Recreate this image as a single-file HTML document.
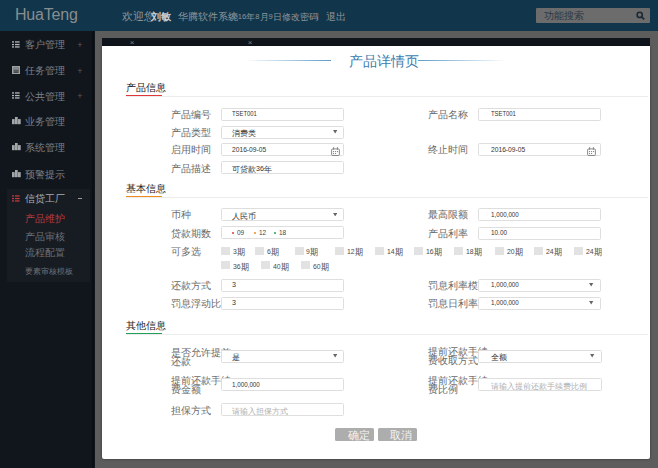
<!DOCTYPE html>
<html><head><meta charset="utf-8"><title>产品详情页</title>
<style>
html,body{margin:0;padding:0}
body{width:658px;height:468px;position:relative;overflow:hidden;background:#5d5d5d;font-family:"Liberation Sans",sans-serif}
body>div{position:absolute}
.t{white-space:nowrap}
.c{line-height:0;position:relative;top:2px}
.l{position:relative;top:1.2px}
</style></head><body>
<div style="left:0.0px;top:0.0px;width:658.0px;height:31.0px;background:#11354a"></div>
<div class="t" style="left:15px;top:4.6px;font-size:16px;line-height:20px;color:#8a8d8f;letter-spacing:-0.2px">HuaTeng</div>
<div class="t" style="left:122.3px;top:10.0px;line-height:12px;font-size:7.50px;color:#8d969d;"><span class="c" style="font-size:10.53px">欢迎您</span></div>
<div class="t" style="left:147.5px;top:10.0px;line-height:12px;font-size:7.50px;color:#8d969d;">:</div>
<div class="t" style="left:151.2px;top:10.0px;line-height:12px;font-size:7.50px;color:#c9cdd0;font-weight:bold"><span class="c" style="font-size:10.13px">刘敏</span></div>
<div class="t" style="left:178.0px;top:10.0px;line-height:12px;font-size:7.50px;color:#8d969d;"><span class="c" style="font-size:9.60px">华腾软件系统</span></div>
<div class="t" style="left:229.4px;top:10.0px;line-height:12px;font-size:7.60px;color:#8d969d;"><span class="l">2016</span><span class="c" style="font-size:8.80px">年</span><span class="l">8</span><span class="c" style="font-size:8.80px">月</span><span class="l">9</span><span class="c" style="font-size:8.80px">日</span></div>
<div class="t" style="left:281.5px;top:10.0px;line-height:12px;font-size:7.50px;color:#8d969d;"><span class="c" style="font-size:9.47px">修改密码</span></div>
<div class="t" style="left:316.8px;top:10.0px;line-height:12px;font-size:7.50px;color:#8d969d;">|</div>
<div class="t" style="left:326.0px;top:10.0px;line-height:12px;font-size:7.50px;color:#8d969d;"><span class="c" style="font-size:10.13px">退出</span></div>
<div style="left:536.0px;top:8.0px;width:114.0px;height:14.8px;background:#6c6c6d;border-radius:1px"></div>
<div class="t" style="left:544.0px;top:9.3px;line-height:12px;font-size:7.50px;color:#2b3944;"><span class="c" style="font-size:9.87px">功能搜索</span></div>
<svg style="position:absolute;left:636px;top:10.5px" width="10" height="10" viewBox="0 0 10 10"><circle cx="3.7" cy="3.9" r="2.6" fill="none" stroke="#1c2a34" stroke-width="1.6"/><line x1="5.6" y1="5.8" x2="8.2" y2="8.4" stroke="#1c2a34" stroke-width="1.7"/></svg>
<div style="left:0.0px;top:31.0px;width:95.0px;height:437.0px;background:#11161d"></div>
<div style="left:91.8px;top:31.0px;width:2.2px;height:437.0px;background:#0b0f14"></div>
<div class="t" style="left:25.3px;top:38.3px;line-height:12px;font-size:7.50px;color:#7d8186;"><span class="c" style="font-size:9.87px">客户管理</span></div>
<div class="t" style="left:77.2px;top:39.0px;line-height:12px;font-size:9.00px;color:#565a5f;">+</div>
<svg style="position:absolute;left:12px;top:40.8px" width="8" height="7" viewBox="0 0 8 7"><g fill="#b4b7ba"><rect x="0" y="0.3" width="2" height="1.3"/><rect x="3" y="0.3" width="4.6" height="1.3"/><rect x="0" y="2.9" width="2" height="1.3"/><rect x="3" y="2.9" width="4.6" height="1.3"/><rect x="0" y="5.3" width="2" height="1.3"/><rect x="3" y="5.3" width="4.6" height="1.3"/></g></svg>
<div class="t" style="left:25.3px;top:63.8px;line-height:12px;font-size:7.50px;color:#7d8186;"><span class="c" style="font-size:9.87px">任务管理</span></div>
<div class="t" style="left:77.2px;top:64.5px;line-height:12px;font-size:9.00px;color:#565a5f;">+</div>
<svg style="position:absolute;left:12px;top:65.5px" width="8.2" height="8.5" viewBox="0 0 8.2 8.5"><rect x="0" y="0" width="8.2" height="8.5" fill="#9fa2a5"/><rect x="1.6" y="1.6" width="5" height="5.3" fill="#3a3d41"/><rect x="1.6" y="1.6" width="5" height="2.2" fill="#8a8d90"/><rect x="1.6" y="4.6" width="5" height="0.9" fill="#777a7d"/></svg>
<div class="t" style="left:25.3px;top:89.5px;line-height:12px;font-size:7.50px;color:#7d8186;"><span class="c" style="font-size:9.87px">公共管理</span></div>
<div class="t" style="left:77.2px;top:90.2px;line-height:12px;font-size:9.00px;color:#565a5f;">+</div>
<svg style="position:absolute;left:12px;top:92.0px" width="8" height="7" viewBox="0 0 8 7"><g fill="#b4b7ba"><rect x="0" y="0.3" width="2" height="1.3"/><rect x="3" y="0.3" width="4.6" height="1.3"/><rect x="0" y="2.9" width="2" height="1.3"/><rect x="3" y="2.9" width="4.6" height="1.3"/><rect x="0" y="5.3" width="2" height="1.3"/><rect x="3" y="5.3" width="4.6" height="1.3"/></g></svg>
<div class="t" style="left:25.3px;top:115.2px;line-height:12px;font-size:7.50px;color:#7d8186;"><span class="c" style="font-size:9.87px">业务管理</span></div>
<svg style="position:absolute;left:11.8px;top:117.2px" width="9" height="8" viewBox="0 0 9 8"><g fill="#a4a7aa"><rect x="0" y="2.1" width="2.7" height="5.1"/><rect x="3" y="0" width="2.7" height="7.2"/><rect x="6" y="2.1" width="2.7" height="5.1"/></g></svg>
<div class="t" style="left:25.3px;top:141.4px;line-height:12px;font-size:7.50px;color:#7d8186;"><span class="c" style="font-size:9.87px">系统管理</span></div>
<svg style="position:absolute;left:11.8px;top:143.4px" width="9" height="8" viewBox="0 0 9 8"><g fill="#a4a7aa"><rect x="0" y="2.1" width="2.7" height="5.1"/><rect x="3" y="0" width="2.7" height="7.2"/><rect x="6" y="2.1" width="2.7" height="5.1"/></g></svg>
<div class="t" style="left:25.3px;top:167.5px;line-height:12px;font-size:7.50px;color:#7d8186;"><span class="c" style="font-size:9.87px">预警提示</span></div>
<svg style="position:absolute;left:11.8px;top:169.5px" width="9" height="8" viewBox="0 0 9 8"><g fill="#a4a7aa"><rect x="0" y="2.1" width="2.7" height="5.1"/><rect x="3" y="0" width="2.7" height="7.2"/><rect x="6" y="2.1" width="2.7" height="5.1"/></g></svg>
<div style="left:6.5px;top:189.4px;width:83.0px;height:92.5px;background:#171c23"></div>
<svg style="position:absolute;left:12px;top:194.8px" width="8" height="7" viewBox="0 0 8 7"><g fill="#c0383a"><rect x="0" y="0.3" width="2" height="1.3"/><rect x="3" y="0.3" width="4.6" height="1.3"/><rect x="0" y="2.9" width="2" height="1.3"/><rect x="3" y="2.9" width="4.6" height="1.3"/><rect x="0" y="5.3" width="2" height="1.3"/><rect x="3" y="5.3" width="4.6" height="1.3"/></g></svg>
<div class="t" style="left:25.2px;top:192.3px;line-height:12px;font-size:7.50px;color:#a9adb1;"><span class="c" style="font-size:9.60px">信贷工厂</span></div>
<div style="left:77.6px;top:198.0px;width:4.7px;height:0.9px;background:#9a9ea2"></div>
<div class="t" style="left:25.2px;top:211.6px;line-height:12px;font-size:7.50px;color:#b83a3c;"><span class="c" style="font-size:9.60px">产品维护</span></div>
<div class="t" style="left:25.2px;top:229.7px;line-height:12px;font-size:7.50px;color:#6d7176;"><span class="c" style="font-size:9.60px">产品审核</span></div>
<div class="t" style="left:25.2px;top:246.2px;line-height:12px;font-size:7.50px;color:#6d7176;"><span class="c" style="font-size:9.60px">流程配置</span></div>
<div class="t" style="left:25.2px;top:264.0px;line-height:12px;font-size:7.50px;color:#6d7176;"><span class="c" style="font-size:8.00px">要素审核模板</span></div>
<div style="left:102.0px;top:38.0px;width:548.0px;height:8.0px;background:#10151c"></div>
<div class="t" style="left:129.8px;top:39.1px;line-height:8px;font-size:8.00px;color:#7d8083;">×</div>
<div class="t" style="left:247.8px;top:39.1px;line-height:8px;font-size:8.00px;color:#7d8083;">×</div>
<div style="left:102.0px;top:46.0px;width:548.0px;height:413.3px;background:#ffffff;border-radius:0 0 2px 2px;box-shadow:0 0 2.5px rgba(0,0,0,.5)"></div>
<div style="left:245.0px;top:60.0px;width:86.0px;height:1.0px;background:linear-gradient(to right,rgba(79,143,190,0),#5c9bc9)"></div>
<div style="left:418.0px;top:60.0px;width:88.0px;height:1.0px;background:linear-gradient(to right,#5c9bc9,rgba(79,143,190,0))"></div>
<div class="t" style="left:349.3px;top:52.8px;line-height:16px;font-size:10.00px;color:#3a7cae;"><span class="c" style="font-size:14.13px">产品详情页</span></div>
<div class="t" style="left:125.6px;top:80.8px;line-height:12px;font-size:7.50px;color:#222;"><span class="c" style="font-size:9.73px">产品信息</span></div>
<div style="left:159.5px;top:85.7px;width:2.2px;height:2.2px;background:#e0383a;border-radius:50%"></div>
<div style="left:126.0px;top:95.7px;width:522.0px;height:1.0px;background:#ececec"></div>
<div style="left:125.6px;top:94.9px;width:36.4px;height:1.6px;background:#e0383a"></div>
<div class="t" style="left:125.6px;top:182.2px;line-height:12px;font-size:7.50px;color:#222;"><span class="c" style="font-size:9.73px">基本信息</span></div>
<div style="left:159.5px;top:187.1px;width:2.2px;height:2.2px;background:#f08c1e;border-radius:50%"></div>
<div style="left:126.0px;top:196.5px;width:522.0px;height:1.0px;background:#ececec"></div>
<div style="left:125.6px;top:195.7px;width:36.4px;height:1.6px;background:#f08c1e"></div>
<div class="t" style="left:125.6px;top:319.0px;line-height:12px;font-size:7.50px;color:#222;"><span class="c" style="font-size:9.73px">其他信息</span></div>
<div style="left:159.5px;top:323.9px;width:2.2px;height:2.2px;background:#22a05a;border-radius:50%"></div>
<div style="left:126.0px;top:333.5px;width:522.0px;height:1.0px;background:#ececec"></div>
<div style="left:125.6px;top:332.7px;width:36.4px;height:1.6px;background:#22a05a"></div>
<div class="t" style="left:170.9px;top:107.9px;line-height:12px;font-size:7.50px;color:#6a6a6a;"><span class="c" style="font-size:9.53px">产品编号</span></div>
<div style="left:221.0px;top:107.5px;width:123.0px;height:13.0px;box-sizing:border-box;border:1px solid #dedede;border-radius:1.5px;background:#fff"></div>
<div class="t" style="left:232.0px;top:108.3px;line-height:12px;font-size:7.20px;color:#333;;transform:scaleX(0.820);transform-origin:0 50%">TSET001</div>
<div class="t" style="left:427.5px;top:107.9px;line-height:12px;font-size:7.50px;color:#6a6a6a;"><span class="c" style="font-size:9.53px">产品名称</span></div>
<div style="left:477.6px;top:107.5px;width:123.0px;height:13.0px;box-sizing:border-box;border:1px solid #dedede;border-radius:1.5px;background:#fff"></div>
<div class="t" style="left:490.6px;top:108.3px;line-height:12px;font-size:7.20px;color:#333;;transform:scaleX(0.820);transform-origin:0 50%">TSET001</div>
<div class="t" style="left:170.9px;top:125.9px;line-height:12px;font-size:7.50px;color:#6a6a6a;"><span class="c" style="font-size:9.53px">产品类型</span></div>
<div style="left:221.0px;top:125.5px;width:123.0px;height:13.0px;box-sizing:border-box;border:1px solid #dedede;border-radius:1.5px;background:#fff"></div>
<div class="t" style="left:232.0px;top:126.3px;line-height:12px;font-size:7.20px;color:#333;"><span class="c" style="font-size:8.27px">消费类</span></div>
<svg style="position:absolute;left:332.8px;top:130.4px" width="4.4" height="3.4" viewBox="0 0 5 4"><path d="M0 0H5L2.5 4Z" fill="#666"/></svg>
<div class="t" style="left:170.9px;top:143.2px;line-height:12px;font-size:7.50px;color:#6a6a6a;"><span class="c" style="font-size:9.53px">启用时间</span></div>
<div style="left:221.0px;top:142.8px;width:123.0px;height:13.0px;box-sizing:border-box;border:1px solid #dedede;border-radius:1.5px;background:#fff"></div>
<div class="t" style="left:232.0px;top:143.6px;line-height:12px;font-size:7.20px;color:#333;;transform:scaleX(0.930);transform-origin:0 50%">2016-09-05</div>
<svg style="position:absolute;left:330.6px;top:146.9px" width="9" height="9" viewBox="0 0 9 9"><rect x="0.6" y="1.9" width="7.8" height="6.6" rx="1.2" fill="none" stroke="#7d7d7d" stroke-width="0.9"/><rect x="2.2" y="0.2" width="0.9" height="2.6" fill="#7d7d7d"/><rect x="5.9" y="0.2" width="0.9" height="2.6" fill="#7d7d7d"/><g fill="#8a8a8a"><rect x="2" y="4" width="1.1" height="1.1"/><rect x="4" y="4" width="1.1" height="1.1"/><rect x="6" y="4" width="1.1" height="1.1"/><rect x="2" y="6" width="1.1" height="1.1"/><rect x="4" y="6" width="1.1" height="1.1"/></g></svg>
<div class="t" style="left:427.5px;top:143.2px;line-height:12px;font-size:7.50px;color:#6a6a6a;"><span class="c" style="font-size:9.53px">终止时间</span></div>
<div style="left:477.6px;top:142.8px;width:123.0px;height:13.0px;box-sizing:border-box;border:1px solid #dedede;border-radius:1.5px;background:#fff"></div>
<div class="t" style="left:490.6px;top:143.6px;line-height:12px;font-size:7.20px;color:#333;;transform:scaleX(0.930);transform-origin:0 50%">2016-09-05</div>
<svg style="position:absolute;left:587.2px;top:146.9px" width="9" height="9" viewBox="0 0 9 9"><rect x="0.6" y="1.9" width="7.8" height="6.6" rx="1.2" fill="none" stroke="#7d7d7d" stroke-width="0.9"/><rect x="2.2" y="0.2" width="0.9" height="2.6" fill="#7d7d7d"/><rect x="5.9" y="0.2" width="0.9" height="2.6" fill="#7d7d7d"/><g fill="#8a8a8a"><rect x="2" y="4" width="1.1" height="1.1"/><rect x="4" y="4" width="1.1" height="1.1"/><rect x="6" y="4" width="1.1" height="1.1"/><rect x="2" y="6" width="1.1" height="1.1"/><rect x="4" y="6" width="1.1" height="1.1"/></g></svg>
<div class="t" style="left:170.9px;top:161.5px;line-height:12px;font-size:7.50px;color:#6a6a6a;"><span class="c" style="font-size:9.53px">产品描述</span></div>
<div style="left:221.0px;top:161.0px;width:123.0px;height:13.0px;box-sizing:border-box;border:1px solid #dedede;border-radius:1.5px;background:#fff"></div>
<div class="t" style="left:232.0px;top:161.8px;line-height:12px;font-size:7.20px;color:#333;"><span class="c" style="font-size:8.27px">可贷款</span><span class="l">36</span><span class="c" style="font-size:8.27px">年</span></div>
<div class="t" style="left:170.9px;top:208.0px;line-height:12px;font-size:7.50px;color:#6a6a6a;"><span class="c" style="font-size:9.53px">币种</span></div>
<div style="left:221.0px;top:208.2px;width:123.0px;height:13.0px;box-sizing:border-box;border:1px solid #dedede;border-radius:1.5px;background:#fff"></div>
<div class="t" style="left:232.0px;top:209.0px;line-height:12px;font-size:7.20px;color:#333;"><span class="c" style="font-size:8.27px">人民币</span></div>
<svg style="position:absolute;left:332.8px;top:213.1px" width="4.4" height="3.4" viewBox="0 0 5 4"><path d="M0 0H5L2.5 4Z" fill="#666"/></svg>
<div class="t" style="left:427.5px;top:208.0px;line-height:12px;font-size:7.50px;color:#6a6a6a;"><span class="c" style="font-size:9.53px">最高限额</span></div>
<div style="left:477.6px;top:208.2px;width:123.0px;height:13.0px;box-sizing:border-box;border:1px solid #dedede;border-radius:1.5px;background:#fff"></div>
<div class="t" style="left:490.6px;top:209.0px;line-height:12px;font-size:7.20px;color:#333;;transform:scaleX(0.870);transform-origin:0 50%">1,000,000</div>
<div class="t" style="left:170.9px;top:226.5px;line-height:12px;font-size:7.50px;color:#6a6a6a;"><span class="c" style="font-size:9.53px">贷款期数</span></div>
<div style="left:221.0px;top:226.2px;width:123.0px;height:13.0px;box-sizing:border-box;border:1px solid #dedede;border-radius:1.5px;background:#fff"></div>
<div style="left:232.0px;top:231.6px;width:2.0px;height:2.0px;background:#e0383a;border-radius:50%"></div>
<div class="t" style="left:236.9px;top:227.0px;line-height:12px;font-size:7.20px;color:#444;;transform:scaleX(0.900);transform-origin:0 50%">09</div>
<div style="left:253.8px;top:231.6px;width:2.0px;height:2.0px;background:#f08c1e;border-radius:50%"></div>
<div class="t" style="left:258.7px;top:227.0px;line-height:12px;font-size:7.20px;color:#444;;transform:scaleX(0.900);transform-origin:0 50%">12</div>
<div style="left:273.9px;top:231.6px;width:2.0px;height:2.0px;background:#22a05a;border-radius:50%"></div>
<div class="t" style="left:278.8px;top:227.0px;line-height:12px;font-size:7.20px;color:#444;;transform:scaleX(0.900);transform-origin:0 50%">18</div>
<div class="t" style="left:427.5px;top:226.5px;line-height:12px;font-size:7.50px;color:#6a6a6a;"><span class="c" style="font-size:9.53px">产品利率</span></div>
<div style="left:477.6px;top:226.5px;width:123.0px;height:13.0px;box-sizing:border-box;border:1px solid #dedede;border-radius:1.5px;background:#fff"></div>
<div class="t" style="left:490.6px;top:227.3px;line-height:12px;font-size:7.20px;color:#333;;transform:scaleX(0.890);transform-origin:0 50%">10.00</div>
<div class="t" style="left:170.9px;top:244.5px;line-height:12px;font-size:7.50px;color:#6a6a6a;"><span class="c" style="font-size:9.53px">可多选</span></div>
<div style="left:221.2px;top:246.5px;width:9.0px;height:8.6px;background:#e2e2e2"></div>
<div class="t" style="left:233.0px;top:245.1px;line-height:12px;font-size:7.60px;color:#4a4a4a;;transform:scaleX(0.900);transform-origin:0 50%"><span class="l">3</span><span class="c" style="font-size:9.33px">期</span></div>
<div style="left:255.3px;top:246.5px;width:9.0px;height:8.6px;background:#e2e2e2"></div>
<div class="t" style="left:267.1px;top:245.1px;line-height:12px;font-size:7.60px;color:#4a4a4a;;transform:scaleX(0.900);transform-origin:0 50%"><span class="l">6</span><span class="c" style="font-size:9.33px">期</span></div>
<div style="left:294.6px;top:246.5px;width:9.0px;height:8.6px;background:#e2e2e2"></div>
<div class="t" style="left:306.4px;top:245.1px;line-height:12px;font-size:7.60px;color:#4a4a4a;;transform:scaleX(0.900);transform-origin:0 50%"><span class="l">9</span><span class="c" style="font-size:9.33px">期</span></div>
<div style="left:335.1px;top:246.5px;width:9.0px;height:8.6px;background:#e2e2e2"></div>
<div class="t" style="left:346.9px;top:245.1px;line-height:12px;font-size:7.60px;color:#4a4a4a;;transform:scaleX(0.900);transform-origin:0 50%"><span class="l">12</span><span class="c" style="font-size:9.33px">期</span></div>
<div style="left:375.0px;top:246.5px;width:9.0px;height:8.6px;background:#e2e2e2"></div>
<div class="t" style="left:386.8px;top:245.1px;line-height:12px;font-size:7.60px;color:#4a4a4a;;transform:scaleX(0.900);transform-origin:0 50%"><span class="l">14</span><span class="c" style="font-size:9.33px">期</span></div>
<div style="left:414.4px;top:246.5px;width:9.0px;height:8.6px;background:#e2e2e2"></div>
<div class="t" style="left:426.2px;top:245.1px;line-height:12px;font-size:7.60px;color:#4a4a4a;;transform:scaleX(0.900);transform-origin:0 50%"><span class="l">16</span><span class="c" style="font-size:9.33px">期</span></div>
<div style="left:454.3px;top:246.5px;width:9.0px;height:8.6px;background:#e2e2e2"></div>
<div class="t" style="left:466.1px;top:245.1px;line-height:12px;font-size:7.60px;color:#4a4a4a;;transform:scaleX(0.900);transform-origin:0 50%"><span class="l">18</span><span class="c" style="font-size:9.33px">期</span></div>
<div style="left:494.8px;top:246.5px;width:9.0px;height:8.6px;background:#e2e2e2"></div>
<div class="t" style="left:506.6px;top:245.1px;line-height:12px;font-size:7.60px;color:#4a4a4a;;transform:scaleX(0.900);transform-origin:0 50%"><span class="l">20</span><span class="c" style="font-size:9.33px">期</span></div>
<div style="left:534.0px;top:246.5px;width:9.0px;height:8.6px;background:#e2e2e2"></div>
<div class="t" style="left:545.8px;top:245.1px;line-height:12px;font-size:7.60px;color:#4a4a4a;;transform:scaleX(0.900);transform-origin:0 50%"><span class="l">24</span><span class="c" style="font-size:9.33px">期</span></div>
<div style="left:574.0px;top:246.5px;width:9.0px;height:8.6px;background:#e2e2e2"></div>
<div class="t" style="left:585.8px;top:245.1px;line-height:12px;font-size:7.60px;color:#4a4a4a;;transform:scaleX(0.900);transform-origin:0 50%"><span class="l">24</span><span class="c" style="font-size:9.33px">期</span></div>
<div style="left:221.2px;top:260.9px;width:9.0px;height:8.6px;background:#e2e2e2"></div>
<div class="t" style="left:233.0px;top:259.5px;line-height:12px;font-size:7.60px;color:#4a4a4a;;transform:scaleX(0.900);transform-origin:0 50%"><span class="l">36</span><span class="c" style="font-size:9.33px">期</span></div>
<div style="left:261.0px;top:260.9px;width:9.0px;height:8.6px;background:#e2e2e2"></div>
<div class="t" style="left:272.8px;top:259.5px;line-height:12px;font-size:7.60px;color:#4a4a4a;;transform:scaleX(0.900);transform-origin:0 50%"><span class="l">40</span><span class="c" style="font-size:9.33px">期</span></div>
<div style="left:301.0px;top:260.9px;width:9.0px;height:8.6px;background:#e2e2e2"></div>
<div class="t" style="left:312.8px;top:259.5px;line-height:12px;font-size:7.60px;color:#4a4a4a;;transform:scaleX(0.900);transform-origin:0 50%"><span class="l">60</span><span class="c" style="font-size:9.33px">期</span></div>
<div class="t" style="left:170.9px;top:278.8px;line-height:12px;font-size:7.50px;color:#6a6a6a;"><span class="c" style="font-size:9.53px">还款方式</span></div>
<div style="left:221.0px;top:278.5px;width:123.0px;height:13.0px;box-sizing:border-box;border:1px solid #dedede;border-radius:1.5px;background:#fff"></div>
<div class="t" style="left:232.0px;top:279.3px;line-height:12px;font-size:7.20px;color:#333;">3</div>
<div class="t" style="left:427.5px;top:279.0px;line-height:12px;font-size:7.50px;color:#6a6a6a;"><span class="c" style="font-size:9.53px">罚息利率模式</span></div>
<div style="left:477.6px;top:278.5px;width:123.0px;height:13.0px;box-sizing:border-box;border:1px solid #dedede;border-radius:1.5px;background:#fff"></div>
<div class="t" style="left:490.6px;top:279.3px;line-height:12px;font-size:7.20px;color:#333;;transform:scaleX(0.870);transform-origin:0 50%">1,000,000</div>
<svg style="position:absolute;left:589.4px;top:283.4px" width="4.4" height="3.4" viewBox="0 0 5 4"><path d="M0 0H5L2.5 4Z" fill="#666"/></svg>
<div class="t" style="left:170.9px;top:296.8px;line-height:12px;font-size:7.50px;color:#6a6a6a;"><span class="c" style="font-size:9.53px">罚息浮动比率</span></div>
<div style="left:221.0px;top:296.5px;width:123.0px;height:13.0px;box-sizing:border-box;border:1px solid #dedede;border-radius:1.5px;background:#fff"></div>
<div class="t" style="left:232.0px;top:297.3px;line-height:12px;font-size:7.20px;color:#333;">3</div>
<div class="t" style="left:427.5px;top:296.6px;line-height:12px;font-size:7.50px;color:#6a6a6a;"><span class="c" style="font-size:9.53px">罚息日利率</span></div>
<div style="left:477.6px;top:296.5px;width:123.0px;height:13.0px;box-sizing:border-box;border:1px solid #dedede;border-radius:1.5px;background:#fff"></div>
<div class="t" style="left:490.6px;top:297.3px;line-height:12px;font-size:7.20px;color:#333;;transform:scaleX(0.870);transform-origin:0 50%">1,000,000</div>
<svg style="position:absolute;left:589.4px;top:301.4px" width="4.4" height="3.4" viewBox="0 0 5 4"><path d="M0 0H5L2.5 4Z" fill="#666"/></svg>
<div class="t" style="left:170.9px;top:345.7px;line-height:12px;font-size:7.50px;color:#6a6a6a;"><span class="c" style="font-size:9.53px">是否允许提前</span></div>
<div class="t" style="left:170.9px;top:354.8px;line-height:12px;font-size:7.50px;color:#6a6a6a;"><span class="c" style="font-size:9.53px">还款</span></div>
<div style="left:221.0px;top:349.5px;width:123.0px;height:13.0px;box-sizing:border-box;border:1px solid #dedede;border-radius:1.5px;background:#fff"></div>
<div class="t" style="left:232.0px;top:350.3px;line-height:12px;font-size:7.20px;color:#333;"><span class="c" style="font-size:8.27px">是</span></div>
<svg style="position:absolute;left:332.8px;top:354.4px" width="4.4" height="3.4" viewBox="0 0 5 4"><path d="M0 0H5L2.5 4Z" fill="#666"/></svg>
<div class="t" style="left:427.5px;top:345.0px;line-height:12px;font-size:7.50px;color:#6a6a6a;"><span class="c" style="font-size:9.53px">提前还款手续</span></div>
<div class="t" style="left:427.5px;top:354.0px;line-height:12px;font-size:7.50px;color:#6a6a6a;"><span class="c" style="font-size:9.53px">费收取方式</span></div>
<div style="left:477.6px;top:349.5px;width:124.0px;height:13.0px;box-sizing:border-box;border:1px solid #dedede;border-radius:1.5px;background:#fff"></div>
<div class="t" style="left:490.6px;top:350.3px;line-height:12px;font-size:7.20px;color:#333;"><span class="c" style="font-size:8.27px">全额</span></div>
<svg style="position:absolute;left:590.4px;top:354.4px" width="4.4" height="3.4" viewBox="0 0 5 4"><path d="M0 0H5L2.5 4Z" fill="#666"/></svg>
<div class="t" style="left:170.9px;top:374.0px;line-height:12px;font-size:7.50px;color:#6a6a6a;"><span class="c" style="font-size:9.53px">提前还款手续</span></div>
<div class="t" style="left:170.9px;top:383.0px;line-height:12px;font-size:7.50px;color:#6a6a6a;"><span class="c" style="font-size:9.53px">费金额</span></div>
<div style="left:221.0px;top:377.5px;width:123.0px;height:13.5px;box-sizing:border-box;border:1px solid #dedede;border-radius:1.5px;background:#fff"></div>
<div class="t" style="left:232.0px;top:378.6px;line-height:12px;font-size:7.20px;color:#333;;transform:scaleX(0.870);transform-origin:0 50%">1,000,000</div>
<div class="t" style="left:427.5px;top:373.7px;line-height:12px;font-size:7.50px;color:#6a6a6a;"><span class="c" style="font-size:9.53px">提前还款手续</span></div>
<div class="t" style="left:427.5px;top:382.6px;line-height:12px;font-size:7.50px;color:#6a6a6a;"><span class="c" style="font-size:9.53px">费比例</span></div>
<div style="left:477.6px;top:377.5px;width:124.0px;height:13.5px;box-sizing:border-box;border:1px solid #dedede;border-radius:1.5px;background:#fff"></div>
<div class="t" style="left:490.6px;top:378.6px;line-height:12px;font-size:7.20px;color:#b0b0b0;"><span class="c" style="font-size:8.27px">请输入提前还款手续费比例</span></div>
<div class="t" style="left:170.9px;top:403.5px;line-height:12px;font-size:7.50px;color:#6a6a6a;"><span class="c" style="font-size:9.53px">担保方式</span></div>
<div style="left:221.0px;top:403.4px;width:123.0px;height:13.0px;box-sizing:border-box;border:1px solid #dedede;border-radius:1.5px;background:#fff"></div>
<div class="t" style="left:232.0px;top:404.2px;line-height:12px;font-size:7.20px;color:#b0b0b0;"><span class="c" style="font-size:8.27px">请输入担保方式</span></div>
<div style="left:335.0px;top:428.0px;width:39.0px;height:13.0px;background:#adadad;border-radius:1.5px"></div>
<div style="left:378.2px;top:428.0px;width:39.0px;height:13.0px;background:#adadad;border-radius:1.5px"></div>
<div class="t" style="left:347.6px;top:428.6px;line-height:12px;font-size:8.00px;color:#f4f4f4;"><span class="c" style="font-size:10.67px">确定</span></div>
<div class="t" style="left:390.4px;top:428.6px;line-height:12px;font-size:8.00px;color:#f4f4f4;"><span class="c" style="font-size:10.67px">取消</span></div>
</body></html>
